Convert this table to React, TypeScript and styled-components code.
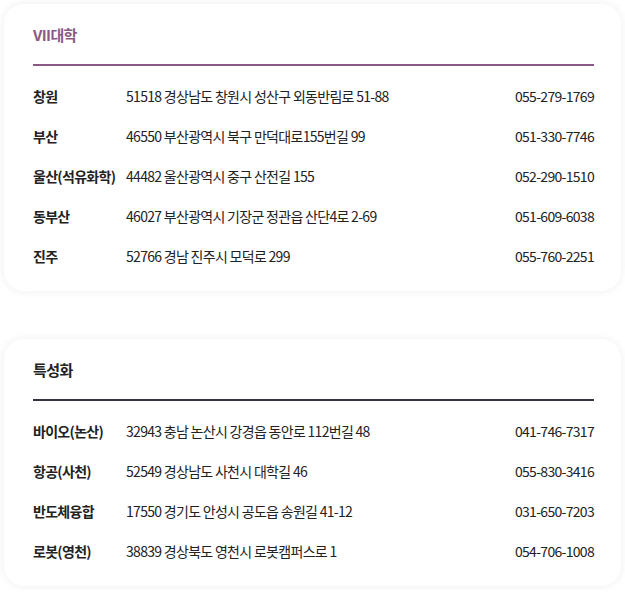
import { FC } from "react"
import styled, { createGlobalStyle } from "styled-components"

const GlobalStyle = createGlobalStyle`
    html, body {
        margin: 0;
        padding: 0;
        background: #ffffff;
    }
    body {
        font-family: "Noto Sans CJK KR", "Noto Sans", sans-serif;
        color: #222;
    }
`

const Page = styled.div`
    display: flex;
    flex-direction: column;
    gap: 48px;
    padding: 4px 4px;
`

const Card = styled.section`
    background: #fff;
    border-radius: 20px;
    box-shadow: 0 0 10px rgba(0, 0, 0, 0.07);
    padding: 21px 27px 15px 29px;
`

const Title = styled.h2<{ $accent?: boolean }>`
    margin: 0;
    font-size: 15px;
    line-height: 20px;
    font-weight: 700;
    letter-spacing: -0.6px;
    color: ${(p) => (p.$accent ? "#8a5a85" : "#222")};
    padding-bottom: 19px;
    border-bottom: 2px solid ${(p) => (p.$accent ? "#8a5a85" : "#34353e")};
`

const List = styled.ul`
    list-style: none;
    margin: 0;
    padding: 10px 0 0;
`

const Row = styled.li`
    display: flex;
    align-items: center;
    height: 40px;
    font-size: 14px;
    letter-spacing: -0.7px;

    strong {
        width: 93px;
        flex-shrink: 0;
        font-weight: 700;
    }

    span {
        flex: 1;
    }

    em {
        font-style: normal;
    }
`

interface Campus {
    name: string
    address: string
    phone: string
}

const univ: Campus[] = [
    { name: "창원", address: "51518 경상남도 창원시 성산구 외동반림로 51-88", phone: "055-279-1769" },
    { name: "부산", address: "46550 부산광역시 북구 만덕대로155번길 99", phone: "051-330-7746" },
    { name: "울산(석유화학)", address: "44482 울산광역시 중구 산전길 155", phone: "052-290-1510" },
    { name: "동부산", address: "46027 부산광역시 기장군 정관읍 산단4로 2-69", phone: "051-609-6038" },
    { name: "진주", address: "52766 경남 진주시 모덕로 299", phone: "055-760-2251" },
]

const special: Campus[] = [
    { name: "바이오(논산)", address: "32943 충남 논산시 강경읍 동안로 112번길 48", phone: "041-746-7317" },
    { name: "항공(사천)", address: "52549 경상남도 사천시 대학길 46", phone: "055-830-3416" },
    { name: "반도체융합", address: "17550 경기도 안성시 공도읍 송원길 41-12", phone: "031-650-7203" },
    { name: "로봇(영천)", address: "38839 경상북도 영천시 로봇캠퍼스로 1", phone: "054-706-1008" },
]

const CampusCard: FC<{ title: string; accent?: boolean; items: Campus[] }> = ({ title, accent, items }) => (
    <Card>
        <Title $accent={accent}>{title}</Title>
        <List>
            {items.map((c) => (
                <Row key={c.name}>
                    <strong>{c.name}</strong>
                    <span>{c.address}</span>
                    <em>{c.phone}</em>
                </Row>
            ))}
        </List>
    </Card>
)

export default function App() {
    return (
        <>
            <GlobalStyle />
            <Page>
                <CampusCard title="VII대학" accent items={univ} />
                <CampusCard title="특성화" items={special} />
            </Page>
        </>
    )
}
